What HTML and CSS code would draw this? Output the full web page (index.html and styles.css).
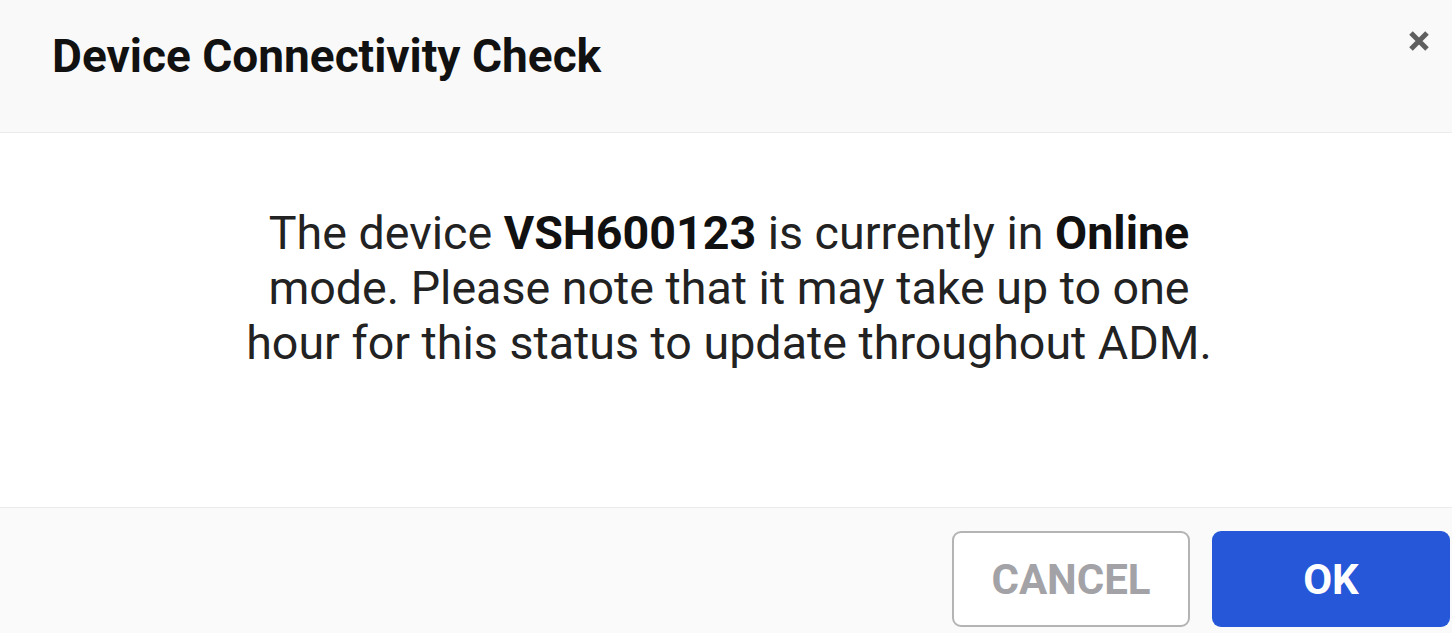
FILE: index.html
```html
<!DOCTYPE html>
<html>
<head>
<meta name="viewport" content="width=device-width, initial-scale=1">
<link rel="stylesheet" href="styles.css">
</head>
<body>

<div class="dialog">
  <div class="dialog-header">
    <h2 class="dialog-title">Device Connectivity Check</h2>
    <button class="dialog-close" type="button" aria-label="Close">
      <svg width="22" height="22" viewBox="0 0 22 22">
        <path d="M3 3 L19 19 M19 3 L3 19" stroke="#5f5f5f" stroke-width="5" stroke-linecap="butt" fill="none"/>
      </svg>
    </button>
  </div>

  <div class="dialog-body">
    <p class="dialog-message">
      The device <strong>VSH600123</strong> is currently in <strong>Online</strong><br>
      mode. Please note that it may take up to one<br>
      hour for this status to update throughout ADM.
    </p>
  </div>

  <div class="dialog-footer">
    <button class="btn btn-cancel" type="button">CANCEL</button>
    <button class="btn btn-ok" type="button">OK</button>
  </div>
</div>

</body>
</html>
```

FILE: styles.css
```css
* {
  box-sizing: border-box;
}

body {
  margin: 0;
  font-family: Roboto, "Liberation Sans", sans-serif;
  background-color: #fff;
}

.dialog {
  width: 1452px;
  height: 633px;
  display: flex;
  flex-direction: column;
}

.dialog-header {
  height: 133px;
  background-color: #f9f9f9;
  border-bottom: 1px solid #ebebeb;
  display: flex;
  align-items: flex-start;
  justify-content: space-between;
  padding: 0 22px 0 52px;
}

.dialog-title {
  margin: 29px 0 0;
  font-size: 46px;
  font-weight: 700;
  line-height: 54px;
  color: #111;
}

.dialog-close {
  margin-top: 30px;
  padding: 0;
  border: none;
  background: none;
  cursor: pointer;
  width: 22px;
  height: 22px;
}

.dialog-body {
  height: 375px;
  background-color: #fff;
  border-bottom: 1px solid #ebebeb;
  padding-top: 73px;
}

.dialog-message {
  margin: 0 0 0 6px;
  text-align: center;
  font-size: 46.6px;
  line-height: 55px;
  color: #222;
}

.dialog-message strong {
  color: #111;
}

.dialog-footer {
  flex: 1;
  background-color: #fafafa;
  display: flex;
  justify-content: flex-end;
  align-items: flex-start;
  gap: 22px;
  padding: 23px 2px 0 0;
}

.btn {
  width: 238px;
  height: 96px;
  border-radius: 9px;
  font-family: Roboto, "Liberation Sans", sans-serif;
  font-size: 42px;
  font-weight: 700;
  cursor: pointer;
}

.btn-cancel {
  background-color: #fff;
  border: 2px solid #b4b4b4;
  color: #a2a2a7;
}

.btn-ok {
  background-color: #2557d8;
  border: none;
  color: #fff;
}
```
